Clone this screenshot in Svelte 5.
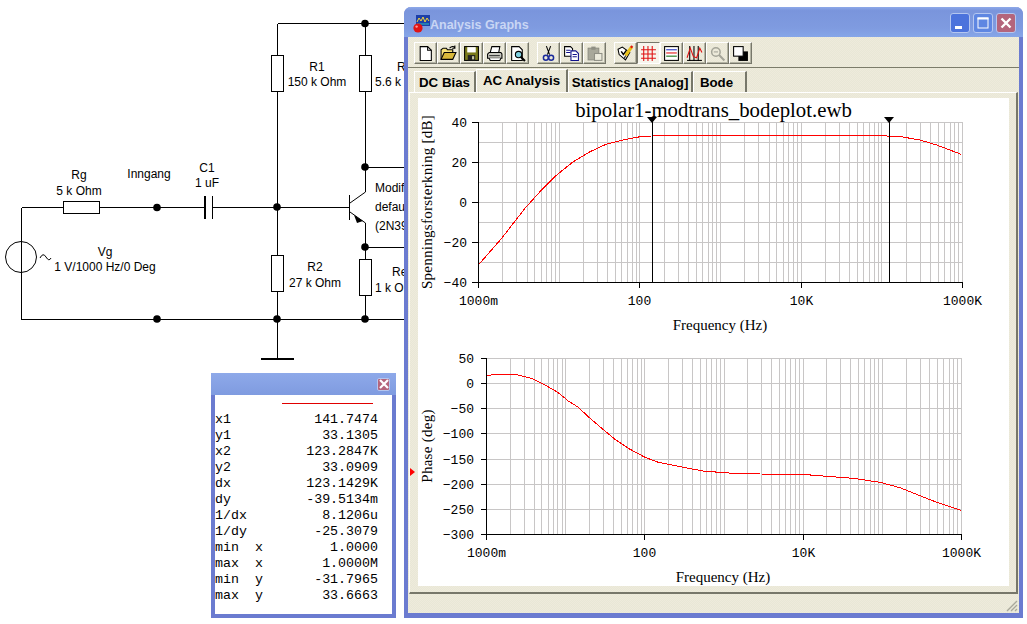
<script>
  // both plots share the same log x axis, six decades from 1 Hz to 1 MHz
  const decades = [0, 1, 2, 3, 4, 5];
  const mult = [1, 2, 3, 4, 5, 6, 7, 8, 9];

  const z1 = (pts) => pts.map(([x, y]) => [410 + x / 3, 110 + y / 3]);
  const z2 = (pts) => pts.map(([x, y]) => [405 + x / 3, 345 + y / 3]);
  const z3 = (pts) => pts.map(([x, y]) => [720 + x / 3, 345 + y / 3]);
  const z4 = (pts) => pts.map(([x, y]) => [860 + x / 3, 110 + y / 3]);

  const gainCurve = [
    ...z1([[205, 465], [240, 425], [275, 385], [310, 340], [345, 295], [390, 245], [440, 195], [490, 155], [540, 125], [590, 102], [640, 90], [690, 80], [725, 78], [740, 76]]),
    ...z4([[75, 76], [85, 79], [120, 79], [140, 83], [180, 90], [230, 105], [270, 120], [303, 133]])
  ];
  const phaseCurve = [
    ...z2([[244, 92], [270, 88], [330, 88], [360, 95], [385, 102], [420, 120], [460, 143], [490, 168], [520, 187], [550, 215], [590, 250], [630, 283], [670, 310], [720, 337], [760, 352], [800, 360], [850, 370], [900, 379]]),
    ...z3([[0, 382], [40, 385], [120, 387], [245, 388], [320, 394], [400, 400], [480, 412], [540, 428], [600, 452], [650, 472], [723, 496]])
  ];

  const charts = [
    {
      top: 118, height: 218,
      x0: 478, x1: 962, y0: 122, y1: 282,
      rows: 8, labels: ["40", "", "20", "", "0", "", "-20", "", "-40"],
      labelX: 467, tickLen: 6,
      yLabel: "Spenningsforsterkning [dB]", yLabelMid: 202,
      tickY: 305, xLabelX: 720, xLabelY: 330,
      curve: gainCurve, cursors: [651.5, 888.5]
    },
    {
      top: 336, height: 250,
      x0: 486, x1: 961, y0: 358, y1: 534,
      rows: 7, labels: ["50", "0", "-50", "-100", "-150", "-200", "-250", "-300"],
      labelX: 474, tickLen: 5,
      yLabel: "Phase (deg)", yLabelMid: 446,
      tickY: 557, xLabelX: 723, xLabelY: 582,
      curve: phaseCurve, cursors: []
    }
  ];

  const px = (v) => Math.round(v) + 0.5;
  const gridX = (c) => {
    const dec = (c.x1 - c.x0) / 6;
    const out = [];
    for (const d of decades) for (const m of mult) out.push(px(c.x0 + (d + Math.log10(m)) * dec));
    out.push(px(c.x1));
    return out;
  };
  const gridY = (c) => Array.from({ length: c.rows + 1 }, (_, i) => px(c.y0 + ((c.y1 - c.y0) * i) / c.rows));
  const xTicks = (c) => {
    const dec = (c.x1 - c.x0) / 6;
    return [["1000m", 0], ["100", 2], ["10K", 4], ["1000K", 6]].map(([t, d]) => ({ t, x: px(c.x0 + d * dec) }));
  };
  const toPoints = (pts) => pts.map(([x, y]) => `${x.toFixed(1)},${y.toFixed(1)}`).join(" ");

  const readout = [
    ["x1", "141.7474"], ["y1", "33.1305"], ["x2", "123.2847K"], ["y2", "33.0909"],
    ["dx", "123.1429K"], ["dy", "-39.5134m"], ["1/dx", "8.1206u"], ["1/dy", "-25.3079"],
    ["min  x", "1.0000"], ["max  x", "1.0000M"], ["min  y", "-31.7965"], ["max  y", "33.6663"]
  ];

  // schematic
  const wires = [
    "M277.5 23.5H404", "M277.5 23.5V55", "M277.5 91V255", "M277.5 291V358",
    "M365.5 23.5V55", "M365.5 91V192", "M365.5 167.5H404", "M365.5 223V259", "M365.5 247.5H404",
    "M365.5 295V319", "M21.5 207.5V319.5H404", "M21.5 207.5H63", "M99 207.5H204", "M213 207.5H349"
  ];
  const resistors = [[63, 201, 36, 12], [271.5, 55, 12, 36], [359.5, 55, 12, 36], [271.5, 255, 12, 36], [359.5, 259, 12, 36]];
  const dots = [[157, 207.5], [365, 23.5], [365, 167], [277, 207], [365, 247], [157, 319], [277, 319], [365, 319]];
  const labels = [
    ["Rg", 79, 179, "middle"], ["5 k Ohm", 79, 195, "middle"], ["Inngang", 149, 178, "middle"],
    ["C1", 207, 172, "middle"], ["1 uF", 207, 187, "middle"], ["Vg", 105, 256, "middle"],
    ["1 V/1000 Hz/0 Deg", 105, 271, "middle"], ["R1", 317, 71, "middle"], ["150 k Ohm", 317, 86, "middle"],
    ["R3", 397, 71, "start"], ["5.6 k Ohm", 375, 86, "start"], ["Modified", 375, 192, "start"],
    ["default", 375, 211, "start"], ["(2N3904)", 375, 230, "start"], ["R2", 315, 271, "middle"],
    ["27 k Ohm", 315, 287, "middle"], ["Re", 392, 276, "start"], ["1 k Ohm", 375, 292, "start"]
  ];
</script>

<div class="desktop">
  <svg class="schematic" width="1027" height="624" viewBox="0 0 1027 624">
    <g class="crisp">
      {#each wires as d}<path {d} />{/each}
      {#each resistors as [x, y, width, height]}
        <rect x={x + (width > height ? 0.5 : 0)} y={y + 0.5} {width} {height} />
      {/each}
      <path d="M205 196V219M212 196V219M204.5 196V219M212.5 196V219" />
      <path d="M261 358.5H294M261 359.5H294" />
      <path d="M349.5 195V220" />
    </g>
    <path class="line" d="M350 203L365.5 192M350 212L365.5 223" />
    <path class="fill" d="M361 222L352 216L355 224Z" transform="translate(2 -1)" />
    <circle class="line" cx="21" cy="257" r="15.5" />
    <path class="line" d="M40 258Q43 252 46 257T51 258" />
    {#each dots as [cx, cy]}<circle class="fill" {cx} {cy} r="3.8" />{/each}
    {#each labels as [t, x, y, anchor]}
      <text class="lbl" {x} {y} text-anchor={anchor}>{t}</text>
    {/each}
  </svg>

  <section class="readout">
    <header class="ro-title">
      <span class="winbtn close small"><svg width="12" height="12" viewBox="0 0 12 12"><path d="M2 2L10 10M10 2L2 10" stroke="#fff" stroke-width="2.2" /></svg></span>
    </header>
    <div class="ro-body">
      <div class="ro-trace"></div>
      <ul>
        {#each readout as [k, v]}
          <li><span>{k}</span><span>{v}</span></li>
        {/each}
      </ul>
    </div>
  </section>

  <section class="window">
    <header class="titlebar">
      <svg class="appicon" width="17" height="18" viewBox="0 0 17 18">
        <rect x="3" y="0" width="14" height="11" fill="#1c3fa8" />
        <path d="M4 7L6 3L8 6L10 2L12 7L14 3L16 6" fill="none" stroke="#f2d23a" stroke-width="1" />
        <path d="M4 9H16" stroke="#28c0c0" stroke-width="1" />
        <circle cx="5" cy="13" r="4.6" fill="#e01414" />
        <circle cx="3.6" cy="11.6" r="1.2" fill="#ff9a9a" />
      </svg>
      <span class="title-text">Analysis Graphs</span>
      <div class="winbtns">
        <span class="winbtn"><svg width="20" height="20" viewBox="0 0 20 20"><rect x="5" y="13" width="7" height="3" fill="#fff" /></svg></span>
        <span class="winbtn"><svg width="20" height="20" viewBox="0 0 20 20"><rect x="5" y="5" width="10" height="10" fill="none" stroke="#fff" /><path d="M4.5 5.5H15.5" stroke="#fff" stroke-width="2" /></svg></span>
        <span class="winbtn close"><svg width="20" height="20" viewBox="0 0 20 20"><path d="M5.5 5.5L14.5 14.5M14.5 5.5L5.5 14.5" stroke="#fff" stroke-width="2.4" /></svg></span>
      </div>
    </header>

    <div class="toolbar">
      <div class="tgroup">
        <span class="tb"><svg viewBox="0 0 16 16"><path d="M3 1.5H10L13.5 5V14.5H3Z" fill="#fff" stroke="#000" /><path d="M10 1.5V5H13.5" fill="none" stroke="#000" /></svg></span>
        <span class="tb"><svg viewBox="0 0 16 16"><path d="M1 13.5V4.5L3 3H6L7 4.5H12V7" fill="#f6e27a" stroke="#000" /><path d="M1 13.5L4 7H15L12 13.5Z" fill="#d8b83a" stroke="#000" /><path d="M9 3Q12 0 14 2.5M14 0.5V3H11.5" fill="none" stroke="#000" /></svg></span>
        <span class="tb"><svg viewBox="0 0 16 16"><rect x="1.5" y="1.5" width="13" height="13" fill="#7a7a1a" stroke="#000" /><rect x="4" y="2" width="8" height="5" fill="#fff" /><rect x="4.5" y="9.5" width="7" height="5" fill="#222" /><rect x="8.5" y="10.5" width="2" height="3" fill="#c8c8a0" /></svg></span>
        <span class="tb"><svg viewBox="0 0 16 16"><path d="M4 7L5.5 1.5H13L12 7Z" fill="#fff" stroke="#000" /><path d="M1.5 8.5L3 7H14L15 8.5V12.5H1.5Z" fill="#c8c8c0" stroke="#000" /><path d="M3 12.5L4 14.5H13L14 12.5" fill="#fff" stroke="#000" /><path d="M3 10H13" stroke="#333" /></svg></span>
        <span class="tb"><svg viewBox="0 0 16 16"><path d="M2.5 1.5H9.5L12.5 4.5V14.5H2.5Z" fill="#fff" stroke="#000" /><circle cx="9" cy="9" r="3" fill="#7fd0e0" stroke="#000" /><path d="M11 11L15 15" stroke="#000" stroke-width="2" /></svg></span>
      </div>
      <div class="tgroup">
        <span class="tb"><svg viewBox="0 0 16 16"><path d="M6 1L9 9M10 1L7 9" stroke="#000" fill="none" /><circle cx="5.5" cy="12" r="2.3" fill="none" stroke="#1a2a9a" stroke-width="1.4" /><circle cx="10.5" cy="12" r="2.3" fill="none" stroke="#1a2a9a" stroke-width="1.4" /></svg></span>
        <span class="tb"><svg viewBox="0 0 16 16"><path d="M1.5 1.5H7L9 3.5V10.5H1.5Z" fill="#fff" stroke="#000" /><path d="M7.5 5.5H12L14.5 8V14.5H7.5Z" fill="#fff" stroke="#10108a" /><path d="M3 5H7M3 7H7M9 9H13M9 11H13" stroke="#10108a" /></svg></span>
        <span class="tb off"><svg viewBox="0 0 16 16"><rect x="2" y="3" width="10" height="11" fill="#a8a89a" stroke="#8f8f84" /><rect x="5" y="1.5" width="4" height="3" fill="#8f8f84" /><rect x="8" y="8" width="7" height="6.5" fill="#ecebdc" stroke="#8f8f84" /></svg></span>
      </div>
      <div class="tgroup">
        <span class="tb"><svg viewBox="0 0 16 16"><path d="M1 4L5 2L12 7L8 14L2 9Z" fill="#fff" stroke="#000" /><path d="M4 6L6 9L9 5" fill="none" stroke="#000" stroke-width="1.4" /><path d="M8 10L14 1.5" stroke="#e8c018" stroke-width="3" /><path d="M13 2.5L14.5 1" stroke="#e01414" stroke-width="2" /><path d="M8 10L7 12.5" stroke="#000" /></svg></span>
        <span class="tb on"><svg viewBox="0 0 16 16"><path d="M3.5 1V15M7.5 1V15M11.5 1V15M1 4.5H15M1 8.5H15M1 12.5H15" stroke="#e01010" fill="none" /></svg></span>
        <span class="tb"><svg viewBox="0 0 16 16"><rect x="1.5" y="1.5" width="13" height="13" fill="#fff" stroke="#000" /><path d="M3 4.5H13" stroke="#2030c0" /><path d="M3 7.5H13" stroke="#e01010" /><path d="M3 10.5H13" stroke="#107010" /></svg></span>
        <span class="tb"><svg viewBox="0 0 16 16"><path d="M3.5 1V15M7.5 1V15M11.5 1V15" stroke="#000" /><path d="M1 12L4 3L7 11L10 12L13 3L15 7" fill="none" stroke="#e01010" /><path d="M1 14.5H15" stroke="#000" /></svg></span>
        <span class="tb off"><svg viewBox="0 0 16 16"><circle cx="6.5" cy="6.5" r="4" fill="none" stroke="#a4a498" stroke-width="1.4" /><path d="M4.5 6.5H8.5" stroke="#a4a498" /><path d="M9.5 9.5L14.5 14.5" stroke="#a4a498" stroke-width="2" /></svg></span>
        <span class="tb"><svg viewBox="0 0 16 16"><rect x="6" y="6" width="9" height="9" fill="#000" /><rect x="1.5" y="1.5" width="9" height="9" fill="#fff" stroke="#000" /></svg></span>
      </div>
    </div>

    <nav class="tabs">
      <span class="tab" style="width:62px">DC Bias</span>
      <span class="tab active" style="width:92px">AC Analysis</span>
      <span class="tab" style="width:125px">Statistics [Analog]</span>
      <span class="tab last" style="width:54px">Bode</span>
    </nav>

    <div class="panel">
      <span class="marker"></span>
      <div class="plot">
        <div class="plot-title">bipolar1-modtrans_bodeplot.ewb</div>
        {#each charts as c}
          <svg class="chart" width="591" height={c.height} viewBox="418 {c.top} 591 {c.height}">
            <g class="grid">
              {#each gridX(c) as x}<path d="M{x} {c.y0}V{c.y1}" />{/each}
              {#each gridY(c) as y}<path d="M{c.x0} {y}H{c.x1 + 1}" />{/each}
            </g>
            <polyline class="curve" points={toPoints(c.curve)} />
            <g class="axis">
              <path d="M{px(c.x0)} {c.y0}V{c.y1 + 1}M{c.x0} {px(c.y1)}H{c.x1 + 1}" />
              {#each gridY(c) as y, i}
                {#if c.labels[i]}<path d="M{c.x0 - c.tickLen} {y}H{c.x0}" />{/if}
              {/each}
              {#each xTicks(c) as tick}<path d="M{tick.x} {c.y1}V{c.y1 + 6}" />{/each}
              {#each c.cursors as x}<path class="cursor" d="M{px(x)} {c.y0 - 1}V{c.y1}" />{/each}
            </g>
            {#each c.cursors as x}
              <path class="tri" d="M{x - 4.5} {c.y0 - 5}H{x + 5.5}L{x + 0.5} {c.y0 + 1}Z" />
            {/each}
            {#each gridY(c) as y, i}
              {#if c.labels[i]}<text class="tick" x={c.labelX} y={y + 4} text-anchor="end">{c.labels[i].replace("-", "\u2212")}</text>{/if}
            {/each}
            {#each xTicks(c) as tick}
              <text class="tick" x={tick.x} y={c.tickY} text-anchor="middle">{tick.t}</text>
            {/each}
            <text class="axis-label" x={c.xLabelX} y={c.xLabelY} text-anchor="middle">Frequency (Hz)</text>
            <text class="axis-label y" text-anchor="middle" transform="translate(432 {c.yLabelMid}) rotate(-90)">{c.yLabel}</text>
          </svg>
        {/each}
      </div>
    </div>

    <footer class="status">
      <svg class="grip" width="12" height="12" viewBox="0 0 12 12"><path d="M11 1L1 11M11 5L5 11M11 9L9 11" stroke="#a8a89a" stroke-width="1.4" /></svg>
    </footer>
  </section>
</div>

<style>
  :global(body) {
    background: #fff;
  }

  .desktop {
    position: relative;
    width: 1027px;
    height: 624px;
    overflow: hidden;
    background: #fff;
  }

  .schematic {
    position: absolute;
    inset: 0;
  }

  .crisp {
    shape-rendering: crispEdges;
  }

  .crisp path,
  .crisp rect {
    fill: none;
    stroke: #000;
    stroke-width: 1;
  }

  .line {
    fill: none;
    stroke: #000;
    stroke-width: 1;
  }

  .fill {
    fill: #000;
  }

  .lbl {
    font: 12px "Liberation Sans", Arial, sans-serif;
    fill: #000;
  }

  /* floating windows */
  .window {
    position: absolute;
    left: 404px;
    top: 7px;
    width: 619px;
    height: 611px;
    box-sizing: border-box;
    display: flex;
    flex-direction: column;
    border: 4px solid #6b7bd0;
    border-top: 0;
    border-bottom-width: 5px;
    border-radius: 7px 7px 0 0;
    background: repeating-conic-gradient(#efeadc 0 25%, #e8e8d6 0 50%) 0 0 / 2px 2px;
  }

  .titlebar {
    flex: 0 0 30px;
    box-sizing: border-box;
    margin: 0 -4px;
    display: flex;
    align-items: center;
    padding: 2px 7px 0 9px;
    border-radius: 7px 7px 0 0;
    background: linear-gradient(#8ea9e9 0, #7a95dc 12%, #7f9be0 70%, #86a6e8 100%);
  }

  .appicon {
    flex: none;
    margin-top: 1px;
  }

  .title-text {
    margin-top: 4px;
    font: bold 12.5px "Liberation Sans", Tahoma, sans-serif;
    color: #c9d6f4;
  }

  .winbtns {
    margin-left: auto;
    display: flex;
    gap: 3px;
  }

  .winbtn {
    width: 20px;
    height: 20px;
    box-sizing: border-box;
    display: flex;
    align-items: center;
    justify-content: center;
    border: 1px solid #b4c6f0;
    border-radius: 3px;
    background: #4c73dc;
  }

  .winbtn:nth-child(2) {
    background: #5f87e2;
  }

  .winbtn svg {
    flex: none;
    margin: -1px;
  }

  .winbtn.close {
    background: #b4657c;
  }

  .winbtn.small {
    width: 13px;
    height: 13px;
    border-radius: 2px;
    margin-left: auto;
  }

  .toolbar {
    flex: 0 0 31px;
    box-sizing: border-box;
    display: flex;
    gap: 8px;
    padding: 5px 0 0 6px;
    border-bottom: 1px solid #7c7c6a;
  }

  .tgroup {
    display: flex;
  }

  .tb {
    width: 23px;
    height: 22px;
    box-sizing: border-box;
    display: flex;
    align-items: center;
    justify-content: center;
    border: 1px solid;
    border-color: #fff #77776a #77776a #fff;
    box-shadow: inset -1px -1px #b4b4a4;
  }

  .tb svg {
    width: 17px;
    height: 17px;
  }

  .tb.on {
    border-color: #77776a #fff #fff #77776a;
    box-shadow: none;
    background: #f7f5ec;
  }

  .tabs {
    flex: 0 0 24px;
    display: flex;
    align-items: flex-end;
    padding-left: 6px;
  }

  .tab {
    height: 21px;
    box-sizing: border-box;
    display: flex;
    align-items: center;
    justify-content: center;
    border-top: 1px solid #fff;
    border-left: 1px solid #fff;
    border-right: 2px solid #77776a;
    font: bold 13.3px "Liberation Sans", Tahoma, sans-serif;
    color: #000;
    white-space: nowrap;
  }

  .tab.active {
    height: 24px;
    padding-bottom: 3px;
    margin-bottom: -1px;
    position: relative;
  }

  .tab.last {
    padding-right: 6px;
  }

  .panel {
    flex: 1;
    position: relative;
    min-height: 0;
    display: flex;
    margin: 0 1px 0 1px;
    padding: 5px 7px 6px 8px;
    border: solid;
    border-width: 1px 2px 2px 1px;
    border-color: #fff #77776a #77776a #fff;
  }

  .marker {
    position: absolute;
    left: 0;
    top: 375px;
    border-left: 5px solid #f00;
    border-top: 4.5px solid transparent;
    border-bottom: 4.5px solid transparent;
  }

  .plot {
    flex: 1;
    display: flex;
    flex-direction: column;
    background: #fff;
    min-width: 0;
  }

  .plot-title {
    height: 20px;
    text-align: center;
    font: 20.8px/23px "Liberation Serif", "Times New Roman", serif;
    color: #000;
    white-space: nowrap;
    position: relative;
    z-index: 1;
  }

  .chart {
    display: block;
    flex: none;
    overflow: visible;
  }

  .grid path {
    stroke: #c8c6c6;
    fill: none;
    shape-rendering: crispEdges;
  }

  .axis path {
    stroke: #000;
    fill: none;
    shape-rendering: crispEdges;
  }

  .curve {
    fill: none;
    stroke: #f00;
    stroke-width: 1;
    shape-rendering: crispEdges;
  }

  .tri {
    fill: #000;
  }

  .tick {
    font: 13px "Liberation Mono", "Courier New", monospace;
    fill: #000;
  }

  .axis-label {
    font: 15px "Liberation Serif", "Times New Roman", serif;
    fill: #000;
  }

  .axis-label.y {
    letter-spacing: 0.27px;
  }

  .status {
    flex: 0 0 19px;
    position: relative;
    display: flex;
    justify-content: flex-end;
    align-items: flex-end;
  }

  .grip {
    margin: 0 1px 1px 0;
  }

  .readout {
    position: absolute;
    left: 211px;
    top: 373px;
    width: 185px;
    height: 245px;
    box-sizing: border-box;
    display: flex;
    flex-direction: column;
    border: 4px solid #6b7bd0;
    border-top: 0;
  }

  .ro-title {
    flex: 0 0 22px;
    margin: 0 -4px;
    padding: 0 6px;
    display: flex;
    align-items: center;
    background: linear-gradient(#8ea9e9, #7f9be0);
  }

  .ro-body {
    flex: 1;
    background: #fff;
    min-height: 0;
  }

  .ro-trace {
    height: 1px;
    margin: 8px 19px 0 67px;
    background: #e00000;
  }

  .ro-body ul {
    list-style: none;
    margin: 7px 0 0;
    padding: 0 14px 0 0;
  }

  .ro-body li {
    height: 16px;
    display: flex;
    justify-content: space-between;
    align-items: center;
    font: 13.3px "Liberation Mono", "Courier New", monospace;
    color: #000;
    white-space: pre;
  }
</style>
